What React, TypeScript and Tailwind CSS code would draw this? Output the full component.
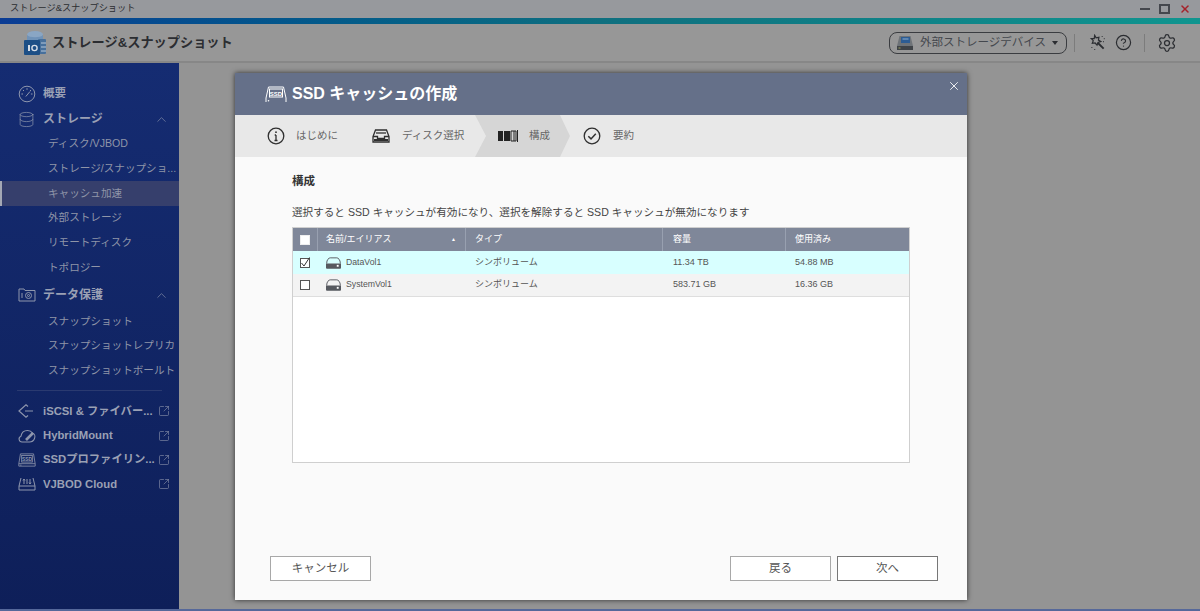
import { ChevronUp, CircleHelp, Database, Settings, SquareArrowOutUpRight, X } from 'lucide-react'
import type { ReactNode } from 'react'

function AppLogo() {
  return (
    <svg viewBox="0 0 24 26" className="h-[26px] w-[24px]">
      <ellipse cx="12" cy="4.5" rx="8" ry="3.5" fill="#8aa6c4" />
      <path d="M4 5v5h16V5c-2 3-14 3-16 0z" fill="#6f92b8" />
      <rect x="15" y="9" width="8" height="15" rx="1" fill="#47709c" />
      <rect x="1" y="10" width="16" height="15" rx="1" fill="#1c4f86" />
      <rect x="5" y="15" width="2" height="6" fill="#d6dde6" />
      <circle cx="11.5" cy="18" r="2.6" fill="none" stroke="#d6dde6" strokeWidth="1.4" />
      <path d="M18 13h5M18 17h5M18 21h5" stroke="#b7c7d9" strokeWidth="1" />
    </svg>
  )
}

function GaugeIcon() {
  return (
    <svg viewBox="0 0 18 18" fill="none" stroke="#8e96ad" strokeWidth="1" className="h-[18px] w-[18px]">
      <circle cx="9" cy="9" r="7.8" />
      <path d="M9 3.2v1.6M3.4 9h1.6M12.9 9h1.6M5 5l1 1M13 5l-1 1M7.8 11.5 12 6.5" />
    </svg>
  )
}

function ProtectIcon() {
  return (
    <svg viewBox="0 0 18 14" fill="none" stroke="#8e96ad" strokeWidth="1" className="h-[14px] w-[18px]">
      <path d="M1 13V1h5l1 1.500h10V13z" />
      <path d="M4 5v5" />
      <circle cx="10.500" cy="7.500" r="3" />
      <circle cx="10.500" cy="7.500" r="1" />
    </svg>
  )
}

function IscsiIcon() {
  return (
    <svg viewBox="0 0 16 14" fill="none" stroke="#8e96ad" strokeWidth="1.200" className="h-[14px] w-[16px]">
      <path d="M10 2.500 8 .8 1 7l7 6.200 2-1.700M7 7h8" />
    </svg>
  )
}

function HybridIcon() {
  return (
    <svg viewBox="0 0 18 14" fill="none" stroke="#8e96ad" strokeWidth="1.100" className="h-[14px] w-[18px]">
      <path d="M4 13a3 3 0 0 1-1-5.800C3.500 4 6 1.500 9.500 1.500c2.500 0 4 1 5 2.500 2 .8 3 3 2 5.500-.8 2-2.500 3.500-5 3.500z" />
      <path d="M8 11l7-7" strokeWidth="2.600" />
    </svg>
  )
}

function SsdIcon({ color = '#8e96ad', className = 'h-[14px] w-[18px]', open }: { color?: string; className?: string; open?: boolean }) {
  return (
    <svg viewBox="0 0 22 17" fill="none" stroke={color} strokeWidth="1" className={className}>
      <path d={open ? 'M1 16v-4L3.500 1h15L21 12v4' : 'M3 1h16l2 12v3H1v-3z'} />
      {!open && <path d="M1 13h20" />}
      <rect x="4.500" y="3" width="13" height="8" />
      <text x="11" y="9.500" fontSize="6" fontWeight="700" textAnchor="middle" fill={color} stroke="none">
        SSD
      </text>
      <circle cx="3.500" cy="14.700" r=".8" fill={color} stroke="none" />
    </svg>
  )
}

function CloudBoxIcon() {
  return (
    <svg viewBox="0 0 18 14" fill="none" stroke="#8e96ad" strokeWidth="1" className="h-[14px] w-[18px]">
      <path d="M3 1 1 9v4h16V9L15 1M1 9h16" />
      <path d="M6 2v5M9 2v5M12 2v5M5 3.500 6 2l1 1.500M11 5.500 12 7l1-1.500" />
    </svg>
  )
}

function DiskIcon() {
  return (
    <svg viewBox="0 0 16 12" className="h-[12px] w-[15px]">
      <path d="M.7 6.500C.7 2.500 3 .5 4.500.5h7c1.500 0 3.800 2 3.800 6" fill="none" stroke="#56595f" strokeWidth="1" />
      <path d="M0 6.500h16V11a1 1 0 0 1-1 1H1a1 1 0 0 1-1-1z" fill="#56595f" />
      <rect x="11.500" y="8" width="2" height="2" fill="#fff" />
    </svg>
  )
}

function ExternalDiskIcon() {
  return (
    <svg viewBox="0 0 16 16" className="h-[16px] w-[16px]">
      <path d="M2.500 1h11L16 11H0z" fill="#6e7378" />
      <rect x="4" y="2" width="9" height="6" fill="#2c5c93" />
      <path d="M5.500 4h6" stroke="#8fb0d2" strokeWidth="1" />
      <rect x="0" y="11" width="16" height="4" fill="#3f4347" />
      <rect x="1.500" y="12.500" width="2" height="1" fill="#9c9f5e" />
    </svg>
  )
}

function StepInfo() {
  return (
    <svg viewBox="0 0 18 18" fill="none" stroke="#2f2f2f" strokeWidth="1.300" className="h-[18px] w-[18px]">
      <circle cx="9" cy="9" r="7.800" />
      <path d="M9 8v5.500M7.500 13.500h3M7.700 8H9" />
      <circle cx="9" cy="5.200" r=".9" fill="#2f2f2f" stroke="none" />
    </svg>
  )
}

function StepDisk() {
  return (
    <svg viewBox="0 0 18 14" fill="none" stroke="#2f2f2f" strokeWidth="1.300" className="h-[14px] w-[18px]">
      <path d="M3.500 1h11l2.500 6.500v5.500H1V7.500z" />
      <path d="M1 7.500h4.500v2h7v-2H17" />
      <path d="M4 4h10" />
      <path d="M2 11h14" strokeWidth="2" />
    </svg>
  )
}

function StepConfig() {
  return (
    <svg viewBox="0 0 20 12" className="h-[12px] w-[20px]">
      <rect x="0" y="1" width="5" height="10" fill="#222" />
      <rect x="6" y="1" width="6" height="10" fill="#222" />
      <path d="M13 1h5v10h-5z" fill="none" stroke="#222" strokeWidth="1" />
      <path d="M16 1v10M19.500 0v12" stroke="#222" strokeWidth="1" />
    </svg>
  )
}

function StepDone() {
  return (
    <svg viewBox="0 0 18 18" fill="none" stroke="#2f2f2f" strokeWidth="1.300" className="h-[18px] w-[18px]">
      <circle cx="9" cy="9" r="7.800" />
      <path d="m5.300 9.200 2.700 2.700 4.800-5.200" strokeWidth="1.500" />
    </svg>
  )
}

function WandIcon() {
  return (
    <svg viewBox="0 0 18 18" fill="none" stroke="#2b2d31" strokeWidth="1.300" className="h-[17px] w-[17px]">
      <path d="m6 1.500 1.500 2.500 3-.5-.5 3 2.500 1.500-3 1-1 2.800-2-2.300-3 .3 1-2.800L2.500 5l3 0z" />
      <path d="m9.500 9.500 6 6" strokeWidth="2" />
      <path d="M14 2v.8M16.500 5h-.8M15 8h.8M3 14v.8M6 16v.8" strokeDasharray="1 1" />
    </svg>
  )
}

function MenuHead({ icon, label, className = '' }: { icon: ReactNode; label: string; className?: string }) {
  return (
    <div className={`flex h-[24px] items-center pl-[18px] pr-[9px] ${className}`}>
      <span className="flex w-[25px] shrink-0 items-center">{icon}</span>
      <span className="text-[12px] font-bold text-[#9aa0b4]">{label}</span>
      <ChevronUp className="ml-auto mr-[1px] h-[15px] w-[15px] text-[#8e96ad]" strokeWidth={1} />
    </div>
  )
}

function MenuItem({ label, active }: { label: string; active?: boolean }) {
  return (
    <div
      className={`flex h-[24.700px] items-center whitespace-nowrap text-[10.600px] text-[#8f95a8] ${
        active ? 'border-l-2 border-[#a4a8b4] bg-[#363f6c] pl-[46px]' : 'pl-[48px]'
      }`}
    >
      {label}
    </div>
  )
}

function LinkItem({ icon, label }: { icon: ReactNode; label: string }) {
  return (
    <div className="flex h-[24.300px] items-center pl-[18px] pr-[9px]">
      <span className="flex w-[25px] shrink-0 items-center">{icon}</span>
      <span className="whitespace-nowrap text-[11.300px] font-bold text-[#9aa0b4]">{label}</span>
      <SquareArrowOutUpRight className="ml-auto h-[12px] w-[12px] shrink-0 text-[#8e96ad]" strokeWidth={1.200} />
    </div>
  )
}

function Sidebar() {
  return (
    <aside className="w-[179px] shrink-0 bg-gradient-to-b from-[#152c72] to-[#0e1f59] pt-[19px]">
      <div className="flex h-[24px] items-center pl-[18px]">
        <span className="flex w-[25px]">
          <GaugeIcon />
        </span>
        <span className="text-[11.500px] font-bold text-[#9aa0b4]">概要</span>
      </div>
      <MenuHead
        className="mt-[1px]"
        icon={<Database className="h-[17px] w-[17px] text-[#8e96ad]" strokeWidth={1} />}
        label="ストレージ"
      />
      <div className="mt-[1px]">
        <MenuItem label="ディスク/VJBOD" />
        <MenuItem label="ストレージ/スナップショ..." />
        <MenuItem label="キャッシュ加速" active />
        <MenuItem label="外部ストレージ" />
        <MenuItem label="リモートディスク" />
        <MenuItem label="トポロジー" />
      </div>
      <MenuHead className="mt-[3px]" icon={<ProtectIcon />} label="データ保護" />
      <div className="mt-[2px]">
        <MenuItem label="スナップショット" />
        <MenuItem label="スナップショットレプリカ" />
        <MenuItem label="スナップショットボールト" />
      </div>
      <div className="mx-[17px] mb-[8px] mt-[7px] border-t border-[#2a3a70]" />
      <LinkItem icon={<IscsiIcon />} label="iSCSI & ファイバー..." />
      <LinkItem icon={<HybridIcon />} label="HybridMount" />
      <LinkItem icon={<SsdIcon />} label="SSDプロファイリン..." />
      <LinkItem icon={<CloudBoxIcon />} label="VJBOD Cloud" />
    </aside>
  )
}

function Checkbox({ checked, border = 'border-[#555]' }: { checked?: boolean; border?: string }) {
  return (
    <span className={`flex h-[10px] w-[10px] items-center justify-center border bg-white ${border}`}>
      {checked && (
        <svg viewBox="0 0 10 10" fill="none" stroke="#333" strokeWidth="1" className="h-[10px] w-[10px] overflow-visible">
          <path d="m1.500 5 2.500 3L9.500-.5" />
        </svg>
      )}
    </span>
  )
}

const ROWS = [
  { name: 'DataVol1', type: 'シンボリューム', size: '11.34 TB', used: '54.88 MB', checked: true },
  { name: 'SystemVol1', type: 'シンボリューム', size: '583.71 GB', used: '16.36 GB', checked: false },
]

function VolumeTable() {
  return (
    <div className="mt-[8px] flex h-[236px] w-[618px] flex-col border border-[#cfcfcf] bg-white">
      <div className="grid h-[23px] grid-cols-[24px_148px_197px_123px_1fr] bg-[#7f8799] text-[9px] text-white">
        <div className="flex items-center justify-center">
          <Checkbox border="border-[#eee]" />
        </div>
        <div className="flex items-center justify-between border-l border-[#98a0b0] pl-[8px] pr-[9px]">
          <span>名前/エイリアス</span>
          <span className="text-[5px]">▲</span>
        </div>
        <div className="flex items-center border-l border-[#98a0b0] pl-[9px]">タイプ</div>
        <div className="flex items-center border-l border-[#98a0b0] pl-[10px]">容量</div>
        <div className="flex items-center border-l border-[#98a0b0] pl-[9px]">使用済み</div>
      </div>
      {ROWS.map(row => (
        <div
          key={row.name}
          className={`grid h-[23px] grid-cols-[24px_148px_197px_123px_1fr] text-[9px] text-[#555] ${
            row.checked ? 'bg-[#d8ffff]' : 'border-b border-[#dedede] bg-[#f3f3f3]'
          }`}
        >
          <div className="flex items-center justify-center">
            <Checkbox checked={row.checked} />
          </div>
          <div className="flex items-center pl-[9px]">
            <DiskIcon />
            <span className="ml-[5px] text-[8.700px]">{row.name}</span>
          </div>
          <div className="flex items-center pl-[10px]">{row.type}</div>
          <div className="flex items-center pl-[11px]">{row.size}</div>
          <div className="flex items-center pl-[10px]">{row.used}</div>
        </div>
      ))}
    </div>
  )
}

function Modal() {
  return (
    <div className="absolute left-[235px] top-[73px] flex h-[527px] w-[732px] flex-col bg-[#fafafa] shadow-[0_0_5px_rgba(0,0,0,0.7)]">
      <div className="relative flex h-[42px] shrink-0 items-center bg-[#657089] pl-[30px]">
        <SsdIcon color="#ffffff" className="h-[17px] w-[22px]" open />
        <span className="ml-[5px] text-[16px] font-bold text-white">SSD キャッシュの作成</span>
        <X className="absolute right-[6px] top-[6px] h-[14px] w-[14px] text-white" strokeWidth={1.500} />
      </div>

      <div className="flex h-[42px] shrink-0 items-center bg-[#e8e8e8] text-[10.500px] text-[#666]">
        <div className="flex w-[240px] items-center pl-[32px]">
          <StepInfo />
          <span className="ml-[11px]">はじめに</span>
          <span className="ml-[34px]">
            <StepDisk />
          </span>
          <span className="ml-[12px]">ディスク選択</span>
        </div>
        <div className="flex h-full w-[95px] items-center bg-[#d6d6d6] pl-[23px] [clip-path:polygon(0_0,85px_0,95px_50%,85px_100%,0_100%,11px_50%)]">
          <StepConfig />
          <span className="ml-[11px]">構成</span>
        </div>
        <span className="ml-[13px]">
          <StepDone />
        </span>
        <span className="ml-[12px]">要約</span>
      </div>

      <div className="flex flex-1 flex-col pl-[57px] pt-[16px]">
        <h2 className="text-[11.500px] font-bold leading-[16px] text-[#333]">構成</h2>
        <p className="mt-[16px] text-[10.600px] leading-[14px] text-[#444]">
          選択すると SSD キャッシュが有効になり、選択を解除すると SSD キャッシュが無効になります
        </p>
        <VolumeTable />
      </div>

      <div className="flex pb-[19px] pl-[35px] pr-[29px] text-[11.500px] text-[#555]">
        <button className="h-[25px] w-[101px] border border-[#a8a8a8] bg-white">キャンセル</button>
        <button className="ml-auto h-[25px] w-[101px] border border-[#a8a8a8] bg-white">戻る</button>
        <button className="ml-[6px] h-[25px] w-[101px] border border-[#777] bg-white">次へ</button>
      </div>
    </div>
  )
}

export default function App() {
  return (
    <div className="relative flex h-[611px] w-[1200px] flex-col overflow-hidden bg-[#949494] [font-family:'Liberation_Sans','Noto_Sans_CJK_JP',sans-serif]">
      <div className="flex h-[18px] shrink-0 items-center bg-[#97999d] pl-[10px] pr-[9px]">
        <span className="text-[9.200px] text-[#2b2d31]">ストレージ&スナップショット</span>
        <div className="ml-auto flex items-center">
          <span className="h-[2px] w-[10px] bg-[#44474d]" />
          <span className="ml-[9px] h-[10px] w-[11px] border-2 border-[#44474d]" />
          <X className="ml-[9px] h-[12px] w-[12px] text-[#a5222b]" strokeWidth={3} />
        </div>
      </div>
      <div className="h-[6px] shrink-0 bg-gradient-to-r from-[#0b3c94] via-[#0f6f7f] to-[#10958f]" />

      <header className="flex h-[39px] shrink-0 items-center border-b-2 border-[#878787] bg-[#979797] pl-[23px] pr-[23px]">
        <AppLogo />
        <span className="ml-[5px] text-[13.200px] font-bold text-[#2b2d31]">ストレージ&スナップショット</span>
        <div className="ml-auto mr-[-1px] flex h-[22px] w-[178px] items-center rounded-[8px] border border-[#3a3c40] pl-[7px] pr-[8px]">
          <ExternalDiskIcon />
          <span className="ml-[7px] text-[11.500px] text-[#44474d]">外部ストレージデバイス</span>
          <span className="ml-auto h-0 w-0 border-x-[3.500px] border-t-[4px] border-x-transparent border-t-[#2b2d31]" />
        </div>
        <span className="ml-[8px] h-[18px] border-l border-[#7c7c7c]" />
        <span className="ml-[14px]">
          <WandIcon />
        </span>
        <CircleHelp className="ml-[9px] h-[17px] w-[17px] text-[#2b2d31]" strokeWidth={1.700} />
        <span className="ml-[12px] h-[18px] border-l border-[#7c7c7c]" />
        <Settings className="ml-[12px] h-[20px] w-[20px] text-[#2b2d31]" strokeWidth={1.500} />
      </header>

      <div className="flex min-h-0 flex-1 border-b-2 border-[#56689a]">
        <Sidebar />
        <div className="flex-1" />
      </div>
      <Modal />
    </div>
  )
}
